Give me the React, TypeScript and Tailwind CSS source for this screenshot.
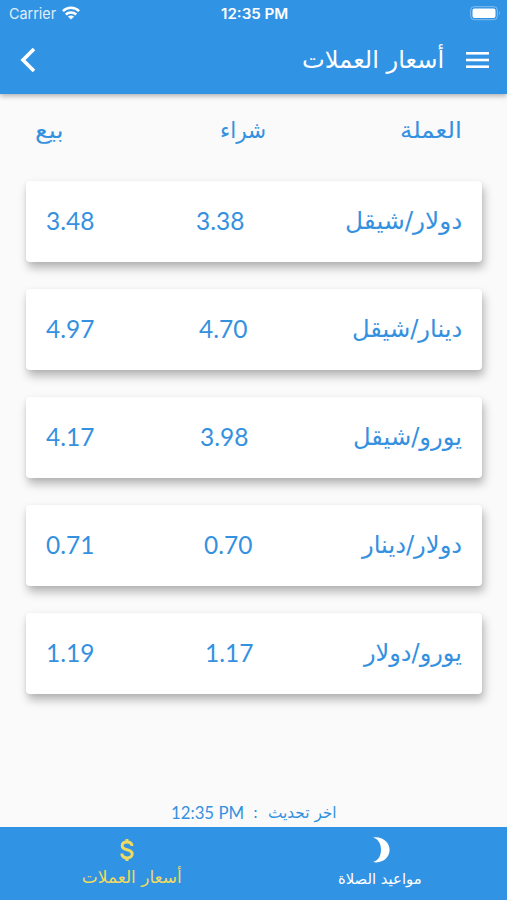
import React from 'react'

const rates = [
  { name: 'دولار/شيقل', width: 117, buy: '3.38', sell: '3.48' },
  { name: 'دينار/شيقل', width: 110, buy: '4.70', sell: '4.97' },
  { name: 'يورو/شيقل', width: 109, buy: '3.98', sell: '4.17' },
  { name: 'دولار/دينار', width: 100, buy: '0.70', sell: '0.71' },
  { name: 'يورو/دولار', width: 98, buy: '1.17', sell: '1.19' },
]

// Text squeezed or stretched to an exact width
function FitText({ width, className = '', children }: { width: number; className?: string; children: string }) {
  const ref = React.useRef<HTMLSpanElement>(null)
  const [scale, setScale] = React.useState(1)

  React.useLayoutEffect(() => {
    if (ref.current) {
      setScale(width / ref.current.offsetWidth)
    }
  }, [width, children])

  return (
    <span dir="ltr" className={`flex shrink-0 ${className}`} style={{ width }}>
      <span ref={ref} className="shrink-0 origin-left whitespace-pre" style={{ transform: `scaleX(${scale})` }}>
        {children}
      </span>
    </span>
  )
}

function StatusBar() {
  return (
    <div className="grid h-[27px] grid-cols-3 items-center pr-1.5 pl-[9px] font-['Inter',sans-serif]">
      <div className="flex items-center gap-1.5 pt-0.5">
        <FitText width={47} className="text-[15px] opacity-85">
          Carrier
        </FitText>
        <svg className="-mt-1" width="18" height="14" viewBox="0 0 18 14" fill="none" stroke="white" strokeWidth="2.5">
          <path d="M0.9 5.1C5.4 0.7 12.6 0.7 17.1 5.1" />
          <path d="M3.8 8.5C6.6 5.7 11.4 5.7 14.2 8.5" />
          <path d="M9 13.6L5.9 10.5C7.6 9 10.4 9 12.1 10.5Z" fill="white" stroke="none" />
        </svg>
      </div>
      <div className="flex justify-center pr-0.5">
        <FitText width={67} className="text-sm font-semibold">
          12:35 PM
        </FitText>
      </div>
      <svg className="justify-self-end" width="31" height="15" viewBox="0 0 31 15">
        <rect x="0.7" y="0.7" width="26.6" height="13" rx="3.5" fill="none" stroke="white" strokeOpacity="0.4" />
        <rect x="2.5" y="2.5" width="23" height="9.4" rx="2" fill="white" />
        <path d="M29 5Q30.6 7.2 29 9.4Z" fill="white" fillOpacity="0.5" />
      </svg>
    </div>
  )
}

function Header() {
  return (
    <header className="relative h-[94px] bg-[#3193e4] text-white shadow-[0_2px_5px_rgba(0,0,0,0.3)]">
      <StatusBar />
      <div className="flex h-[66px] items-center pr-[18px] pl-[20px]">
        <svg width="16" height="24" viewBox="0 0 16 24" fill="none" stroke="white" strokeWidth="3.6">
          <path d="M14 1L3 12L14 23" />
        </svg>
        <FitText width={142} className="ml-auto text-[24px]">
          أسعار العملات
        </FitText>
        <svg className="ml-[22px]" width="23" height="16" viewBox="0 0 23 16" fill="white">
          <rect width="23" height="2.6" />
          <rect y="6.7" width="23" height="2.6" />
          <rect y="13.4" width="23" height="2.6" />
        </svg>
      </div>
    </header>
  )
}

function RateCard({ rate }: { rate: (typeof rates)[number] }) {
  return (
    <div className="flex h-[81px] items-center justify-between rounded-[4px] bg-white px-[20px] pb-0.5 shadow-[2px_6px_10px_rgba(0,0,0,0.27),0_1px_4px_rgba(0,0,0,0.06)]">
      <FitText width={rate.width} className="text-[24px]">
        {rate.name}
      </FitText>
      <FitText width={48} className="font-['Lato',sans-serif] text-[25px]">
        {rate.buy}
      </FitText>
      <FitText width={48} className="font-['Lato',sans-serif] text-[25px]">
        {rate.sell}
      </FitText>
    </div>
  )
}

function BottomBar() {
  return (
    <nav className="grid h-[73px] grid-cols-2 bg-[#3193e4]">
      <div className="flex flex-col items-center pt-[10px] text-white">
        <svg className="ml-px" width="18" height="26" viewBox="0 0 18 26" fill="white">
          <path d="M1 0.4C10 -1.2 17.6 5 17.6 12.8C17.6 20.8 10 27 1 25C6.5 23.5 9 18.5 9 12.8C9 7 6.5 2 1 0.4Z" />
        </svg>
        <FitText width={84} className="mt-[7px] text-[15px]">
          مواعيد الصلاة
        </FitText>
      </div>
      <div className="flex flex-col items-center pt-[11px] text-[#efda61]">
        <svg width="14" height="24" viewBox="0 0 14 24" fill="none" stroke="currentColor" strokeWidth="3">
          <path d="M7 1V4.5M7 19.5V23" />
          <path d="M12 8C11.8 5.4 9.8 4 7 4C4.2 4 2.2 5.5 2.2 7.9C2.2 13 12.2 10.4 12.2 15.8C12.2 18.3 10 19.9 7 19.9C3.8 19.9 2 18.2 1.7 15.5" />
        </svg>
        <FitText width={100} className="mt-[5px] ml-2.5 text-[17px]">
          أسعار العملات
        </FitText>
      </div>
    </nav>
  )
}

function App() {
  return (
    <div dir="rtl" className="flex h-[900px] w-[507px] flex-col overflow-hidden bg-[#fafafa] font-['DejaVu_Sans',sans-serif] leading-tight text-[#3491df]">
      <div dir="ltr">
        <Header />
      </div>
      <div className="flex h-[87px] items-center justify-between pr-[45px] pb-3.5 pl-[35px] text-[23px]">
        <FitText width={62}>العملة</FitText>
        <div className="ml-[22px]">
          <FitText width={46}>شراء</FitText>
        </div>
        <FitText width={29}>بيع</FitText>
      </div>
      <main className="flex flex-1 flex-col gap-[27px] pr-[25px] pl-[26px]">
        {rates.map((rate) => (
          <RateCard key={rate.name} rate={rate} />
        ))}
      </main>
      <div className="flex h-[29px] items-center justify-center text-[16px]">
        <FitText width={69}>اخر تحديث</FitText>
        <span className="w-[24px] text-center">:</span>
        <FitText width={73} className="font-['Lato',sans-serif] text-[17px]">
          12:35 PM
        </FitText>
      </div>
      <BottomBar />
    </div>
  )
}

export default App
